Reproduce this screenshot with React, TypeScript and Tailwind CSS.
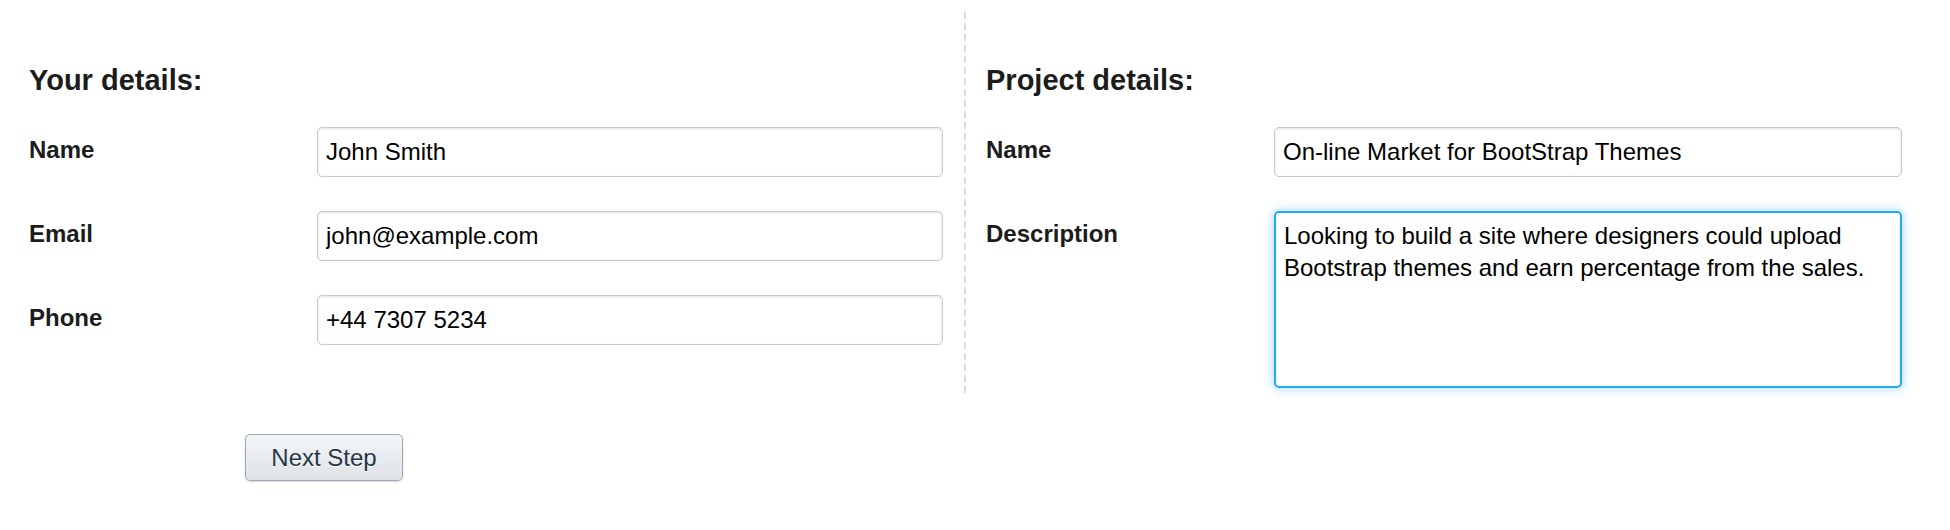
import React from "react";

const Field = ({ label, value }: { label: string; value: string }) => {
  return (
    <div className="flex">
      <label className="w-[288px] shrink-0 pt-[11px] text-[24px] leading-[24px] font-bold text-[#1c1c1c]">{label}</label>
      <input
        type="text"
        defaultValue={value}
        className="h-[50px] flex-1 rounded-[5px] border border-[#c9c9c9] bg-white px-[8px] text-[24px] text-black shadow-[inset_0_1px_3px_rgba(0,0,0,0.12)] outline-none"
      />
    </div>
  );
};

const App = () => {
  return (
    <div className="min-h-[530px] w-full bg-white font-['Liberation_Sans',Arial,sans-serif]">
      <div className="flex pt-[12px] pl-[29px] pr-[48px]">
        <div className="w-[914px] shrink-0">
          <h2 className="mt-[51px] text-[29px] leading-[34px] font-bold text-[#1c1c1c]">Your details:</h2>
          <div className="mt-[30px] flex flex-col gap-[34px]">
            <Field label="Name" value="John Smith" />
            <Field label="Email" value="john@example.com" />
            <Field label="Phone" value="+44 7307 5234" />
          </div>
        </div>

        <div className="ml-[21px] w-[2px] self-stretch bg-[repeating-linear-gradient(to_bottom,#dcdcdc_0px,#dcdcdc_7px,transparent_7px,transparent_11px)]" />

        <div className="ml-[20px] flex-1 pb-[9px]">
          <h2 className="mt-[51px] text-[29px] leading-[34px] font-bold text-[#1c1c1c]">Project details:</h2>
          <div className="mt-[30px] flex flex-col gap-[34px]">
            <Field label="Name" value="On-line Market for BootStrap Themes" />
            <div className="flex">
              <label className="w-[288px] shrink-0 pt-[11px] text-[24px] leading-[24px] font-bold text-[#1c1c1c]">Description</label>
              <textarea
                defaultValue="Looking to build a site where designers could upload Bootstrap themes and earn percentage from the sales."
                className="h-[177px] flex-1 resize-none rounded-[5px] border-2 border-[#22a9f7] bg-white px-[8px] pt-[7px] text-[24px] leading-[32px] text-black shadow-[0_0_8px_2px_rgba(34,169,247,0.3)] outline-none"
              />
            </div>
          </div>
        </div>
      </div>

      <div className="mt-[37px] pl-[245px]">
        <button className="h-[47px] w-[158px] rounded-[5px] border border-[#9aa8b8] bg-gradient-to-b from-[#f3f5f7] to-[#dfe3e7] text-[24px] text-[#263747] shadow-[0_1px_2px_rgba(0,0,0,0.15)] [text-shadow:0_1px_0_#fff]">
          Next Step
        </button>
      </div>
    </div>
  );
};

export default App;
